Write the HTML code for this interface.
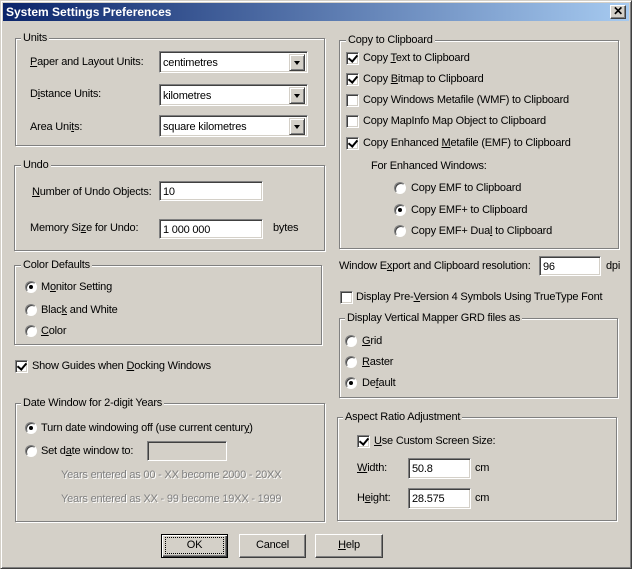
<!DOCTYPE html>
<html><head><style>
*{margin:0;padding:0;box-sizing:border-box}
body{width:632px;height:569px;overflow:hidden;background:#d4d0c8;font-family:"Liberation Sans",Arial,sans-serif;font-size:11px;letter-spacing:-0.2px;color:#000;position:relative}
.win{position:absolute;left:0;top:0;width:632px;height:569px;border:1px solid;border-color:#d4d0c8 #404040 #404040 #d4d0c8;box-shadow:inset 1px 1px #fff,inset -1px -1px #808080}
.title{position:absolute;left:3px;top:3px;width:626px;height:18px;background:linear-gradient(to right,#0a246a,#a6caf0);color:#fff;font-weight:bold;font-size:12px;letter-spacing:0;line-height:18px;padding-left:3px}
.close{position:absolute;left:610px;top:5px;width:16px;height:14px;background:#d4d0c8;border:1px solid;border-color:#fff #404040 #404040 #fff;box-shadow:inset -1px -1px #808080;font-size:12px;font-weight:bold;line-height:11px;text-align:center;color:#000}
.g{position:absolute;border:1px solid #808080;box-shadow:1px 1px 0 #fff,inset 1px 1px 0 #fff}
.lg{position:absolute;top:-8px;left:6px;background:#d4d0c8;padding:0 2px;line-height:14px}
.t{position:absolute;line-height:14px;white-space:nowrap}
.gray{color:#808080;text-shadow:1px 1px #fff}
.in{position:absolute;background:#fff;border:1px solid;border-color:#808080 #fff #fff #808080;box-shadow:inset 1px 1px #404040,inset -1px -1px #d4d0c8;padding:3px 3px 0;line-height:14px}
.in.c{padding-top:4px}
.in.dis{background:#d4d0c8}
.dd{position:absolute;right:2px;top:2px;width:16px;height:17px;background:#d4d0c8;border:1px solid;border-color:#d4d0c8 #404040 #404040 #d4d0c8;box-shadow:inset 1px 1px #fff,inset -1px -1px #808080}
.dd:after{content:"";position:absolute;left:4px;top:6px;border:3.5px solid transparent;border-top:4px solid #000;border-bottom:0}
.cb{position:absolute;width:13px;height:13px;background:#fff;border:1px solid;border-color:#808080 #fff #fff #808080;box-shadow:inset 1px 1px #404040,inset -1px -1px #d4d0c8}
.cb.on:after{content:"";position:absolute;width:4px;height:7px;border:solid #000;border-width:0 2px 2px 0;transform:rotate(40deg);left:3px;top:0px}
.rb{position:absolute;width:12px;height:12px;border-radius:50%;background:#fff;border:1px solid;border-color:#808080 #fff #fff #808080;box-shadow:inset 1px 1px #404040}
.rb.on:after{content:"";position:absolute;left:3px;top:3px;width:4px;height:4px;border-radius:50%;background:#000}
.btn{position:absolute;height:24px;background:#d4d0c8;border:1px solid;border-color:#fff #404040 #404040 #fff;box-shadow:inset -1px -1px #808080;text-align:center;line-height:21px}
u{text-decoration:underline}
</style></head><body>
<div class="win"></div>
<div class="title">System Settings Preferences</div>
<div class="close">✕</div>

<div class="g" style="left:15px;top:38px;width:310px;height:108px"><span class="lg" style="left:5px">Units</span></div>
<div class="t" style="left:30px;top:55px"><u>P</u>aper and Layout Units:</div>
<div class="in c" style="left:159px;top:51px;width:149px;height:22px">centimetres<div class="dd"></div></div>
<div class="t" style="left:30px;top:87px">D<u>i</u>stance Units:</div>
<div class="in c" style="left:159px;top:84px;width:149px;height:22px">kilometres<div class="dd"></div></div>
<div class="t" style="left:30px;top:120px">Area Uni<u>t</u>s:</div>
<div class="in c" style="left:159px;top:115px;width:149px;height:22px">square kilometres<div class="dd"></div></div>

<div class="g" style="left:14px;top:165px;width:311px;height:86px"><span class="lg" style="left:6px">Undo</span></div>
<div class="t" style="left:32px;top:185px"><u>N</u>umber of Undo Objects:</div>
<div class="in" style="left:159px;top:181px;width:104px;height:20px">10</div>
<div class="t" style="left:30px;top:221px">Memory Si<u>z</u>e for Undo:</div>
<div class="in" style="left:159px;top:219px;width:104px;height:20px">1 000 000</div>
<div class="t" style="left:273px;top:221px">bytes</div>

<div class="g" style="left:14px;top:265px;width:308px;height:80px"><span class="lg" style="left:6px">Color Defaults</span></div>
<div class="rb on" style="left:25px;top:281px"></div><div class="t" style="left:41px;top:280px">M<u>o</u>nitor Setting</div>
<div class="rb" style="left:25px;top:304px"></div><div class="t" style="left:41px;top:303px">Blac<u>k</u> and White</div>
<div class="rb" style="left:25px;top:325px"></div><div class="t" style="left:41px;top:324px"><u>C</u>olor</div>

<div class="cb on" style="left:15px;top:360px"></div><div class="t" style="left:32px;top:359px">Show Guides when <u>D</u>ocking Windows</div>

<div class="g" style="left:15px;top:403px;width:310px;height:119px"><span class="lg" style="left:5px">Date Window for 2-digit Years</span></div>
<div class="rb on" style="left:25px;top:422px"></div><div class="t" style="left:41px;top:421px">Turn date windowing off (use current centur<u>y</u>)</div>
<div class="rb" style="left:25px;top:445px"></div><div class="t" style="left:41px;top:444px">Set d<u>a</u>te window to:</div>
<div class="in dis" style="left:147px;top:441px;width:80px;height:20px"></div>
<div class="t gray" style="left:61px;top:468px">Years entered as 00 - XX become 2000 - 20XX</div>
<div class="t gray" style="left:61px;top:492px">Years entered as XX - 99 become 19XX - 1999</div>

<div class="g" style="left:339px;top:40px;width:280px;height:209px"><span class="lg" style="left:6px">Copy to Clipboard</span></div>
<div class="cb on" style="left:346px;top:52px"></div><div class="t" style="left:363px;top:51px">Copy <u>T</u>ext to Clipboard</div>
<div class="cb on" style="left:346px;top:73px"></div><div class="t" style="left:363px;top:72px">Copy <u>B</u>itmap to Clipboard</div>
<div class="cb" style="left:346px;top:94px"></div><div class="t" style="left:363px;top:93px">Copy Windows Metafile (WMF) to Clipboard</div>
<div class="cb" style="left:346px;top:115px"></div><div class="t" style="left:363px;top:114px">Copy MapInfo Map Object to Clipboard</div>
<div class="cb on" style="left:346px;top:137px"></div><div class="t" style="left:363px;top:136px">Copy Enhanced <u>M</u>etafile (EMF) to Clipboard</div>
<div class="t" style="left:371px;top:159px">For Enhanced Windows:</div>
<div class="rb" style="left:394px;top:182px"></div><div class="t" style="left:411px;top:181px">Copy EMF to Clipboard</div>
<div class="rb on" style="left:394px;top:204px"></div><div class="t" style="left:411px;top:203px">Copy EMF+ to Clipboard</div>
<div class="rb" style="left:394px;top:225px"></div><div class="t" style="left:411px;top:224px">Copy EMF+ Dua<u>l</u> to Clipboard</div>

<div class="t" style="left:339px;top:259px">Window E<u>x</u>port and Clipboard resolution:</div>
<div class="in" style="left:539px;top:256px;width:62px;height:20px">96</div>
<div class="t" style="left:606px;top:259px">dpi</div>
<div class="cb" style="left:340px;top:291px"></div><div class="t" style="left:356px;top:290px">Display Pre-<u>V</u>ersion 4 Symbols Using TrueType Font</div>

<div class="g" style="left:339px;top:318px;width:279px;height:80px"><span class="lg" style="left:5px">Display Vertical Mapper GRD files as</span></div>
<div class="rb" style="left:345px;top:335px"></div><div class="t" style="left:362px;top:334px"><u>G</u>rid</div>
<div class="rb" style="left:345px;top:356px"></div><div class="t" style="left:362px;top:355px"><u>R</u>aster</div>
<div class="rb on" style="left:345px;top:377px"></div><div class="t" style="left:362px;top:376px">De<u>f</u>ault</div>

<div class="g" style="left:337px;top:417px;width:280px;height:104px"><span class="lg" style="left:5px">Aspect Ratio Adjustment</span></div>
<div class="cb on" style="left:357px;top:435px"></div><div class="t" style="left:374px;top:434px"><u>U</u>se Custom Screen Size:</div>
<div class="t" style="left:357px;top:461px"><u>W</u>idth:</div>
<div class="in" style="left:408px;top:458px;width:63px;height:21px">50.8</div>
<div class="t" style="left:475px;top:461px">cm</div>
<div class="t" style="left:357px;top:491px">H<u>e</u>ight:</div>
<div class="in" style="left:408px;top:488px;width:63px;height:21px">28.575</div>
<div class="t" style="left:475px;top:491px">cm</div>

<div class="btn" style="left:161px;top:534px;width:67px;border-color:#000;box-shadow:inset 1px 1px #fff,inset -1px -1px #404040,inset -2px -2px #808080"><span style="outline:1px dotted #000;display:inline-block;width:57px;line-height:15px;margin-top:2px">OK</span></div>
<div class="btn" style="left:239px;top:534px;width:67px">Cancel</div>
<div class="btn" style="left:315px;top:534px;width:68px"><u>H</u>elp</div>
</body></html>
